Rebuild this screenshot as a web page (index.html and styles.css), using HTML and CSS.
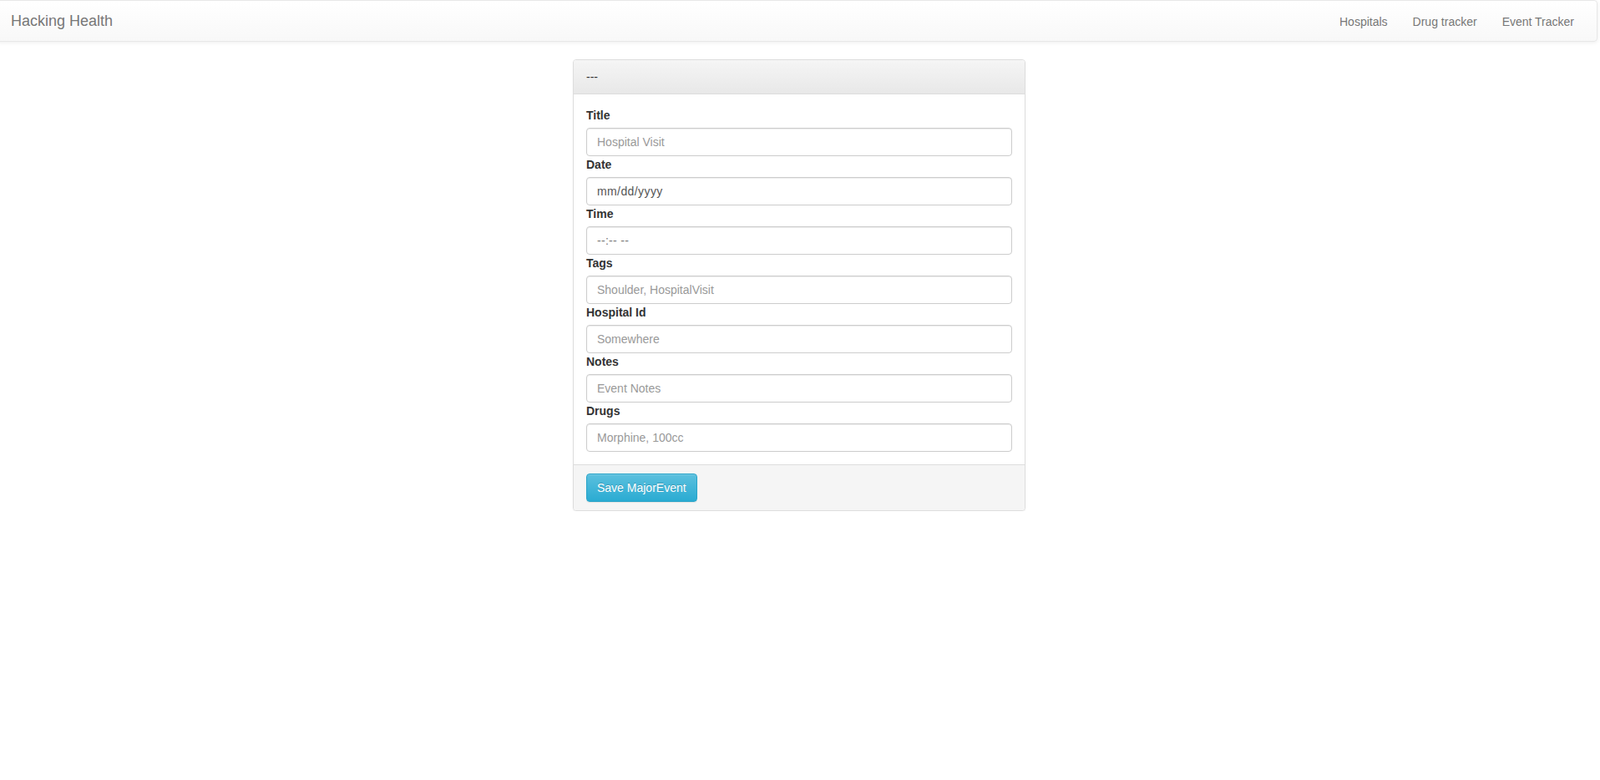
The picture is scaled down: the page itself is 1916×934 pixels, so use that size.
FILE: index.html
```html
<!DOCTYPE html>
<html>
<head>
<meta charset="utf-8">
<title>Hacking Health</title>
<link rel="stylesheet" href="styles.css">
</head>
<body>
<nav class="navbar">
  <a class="brand" href="#">Hacking Health</a>
  <ul class="nav">
    <li><a href="#">Hospitals</a></li>
    <li><a href="#">Drug tracker</a></li>
    <li><a href="#">Event Tracker</a></li>
  </ul>
</nav>
<main class="page">
  <section class="panel">
    <div class="panel-heading">---</div>
    <form class="panel-body">
      <div class="group"><label>Title</label><input class="field" type="text" placeholder="Hospital Visit"></div>
      <div class="group"><label>Date</label><input class="field filled date" type="text" value="mm/dd/yyyy"></div>
      <div class="group"><label>Time</label><input class="field filled time" type="text" value="--:-- --"></div>
      <div class="group"><label>Tags</label><input class="field" type="text" placeholder="Shoulder, HospitalVisit"></div>
      <div class="group"><label>Hospital Id</label><input class="field" type="text" placeholder="Somewhere"></div>
      <div class="group"><label>Notes</label><input class="field" type="text" placeholder="Event Notes"></div>
      <div class="group"><label>Drugs</label><input class="field" type="text" placeholder="Morphine, 100cc"></div>
    </form>
    <div class="panel-footer">
      <button class="btn" type="button">Save MajorEvent</button>
    </div>
  </section>
</main>
</body>
</html>
```
FILE: styles.css
```css
html, body {
  margin: 0;
  padding: 0;
  background: #fff;
}
body {
  font-family: "Liberation Sans", Arial, sans-serif;
  font-size: 14px;
  line-height: 20px;
  color: #333;
}
.navbar {
  display: flex;
  justify-content: space-between;
  align-items: center;
  height: 48px;
  margin: 0 3px 21px -3px;
  padding: 0 12px 0 0;
  border: 1px solid #e7e7e7;
  border-radius: 0 4px 4px 0;
  background: linear-gradient(to bottom, #fff 0, #f8f8f8 100%);
  box-shadow: inset 0 1px 0 rgba(255,255,255,.15), 0 1px 5px rgba(0,0,0,.075);
}
.brand {
  padding: 15px 15px;
  font-size: 18px;
  line-height: 20px;
  color: #777;
  text-decoration: none;
}
.nav {
  display: flex;
  list-style: none;
  margin: 0;
  padding: 0;
}
.nav a {
  display: block;
  padding: 15px 15px 14px;
  color: #777;
  text-decoration: none;
  font-size: 14px;
  line-height: 20px;
}
.page {
  display: flex;
  justify-content: center;
  padding-right: 2px;
}
.panel {
  width: 540px;
  border: 1px solid #ddd;
  border-radius: 4px;
  background: #fff;
  box-shadow: 0 1px 2px rgba(0,0,0,.05);
}
.panel-heading {
  padding: 10px 15px;
  border-bottom: 1px solid #ddd;
  border-radius: 3px 3px 0 0;
  background: linear-gradient(to bottom, #f5f5f5 0, #e8e8e8 100%);
  color: #333;
}
.panel-body {
  display: flex;
  flex-direction: column;
  padding: 15px;
  margin: 0;
}
.group label {
  display: block;
  margin-bottom: 5px;
  font-weight: bold;
  color: #333;
}
.field {
  display: block;
  box-sizing: border-box;
  width: 100%;
  height: 34px;
  margin: 0;
  padding: 6px 12px;
  font-family: "Liberation Sans", Arial, sans-serif;
  font-size: 14px;
  line-height: 20px;
  color: #555;
  background: #fff;
  border: 1px solid #ccc;
  border-radius: 4px;
  box-shadow: inset 0 1px 1px rgba(0,0,0,.075);
  outline: none;
}
.field::placeholder {
  color: #999;
  opacity: 1;
}
.field.date {
  letter-spacing: 0.4px;
}
.field.time {
  color: #777;
  letter-spacing: 0.3px;
}
.panel-footer {
  padding: 10px 15px;
  background: #f5f5f5;
  border-top: 1px solid #ddd;
  border-radius: 0 0 3px 3px;
}
.btn {
  display: inline-block;
  height: 34px;
  padding: 6px 12px;
  font-family: "Liberation Sans", Arial, sans-serif;
  font-size: 14px;
  line-height: 20px;
  color: #fff;
  text-shadow: 0 -1px 0 rgba(0,0,0,.2);
  background: linear-gradient(to bottom, #5bc0de 0, #2aabd2 100%);
  border: 1px solid #28a4c9;
  border-radius: 4px;
  box-shadow: inset 0 1px 0 rgba(255,255,255,.15), 0 1px 1px rgba(0,0,0,.075);
  cursor: pointer;
}
```
